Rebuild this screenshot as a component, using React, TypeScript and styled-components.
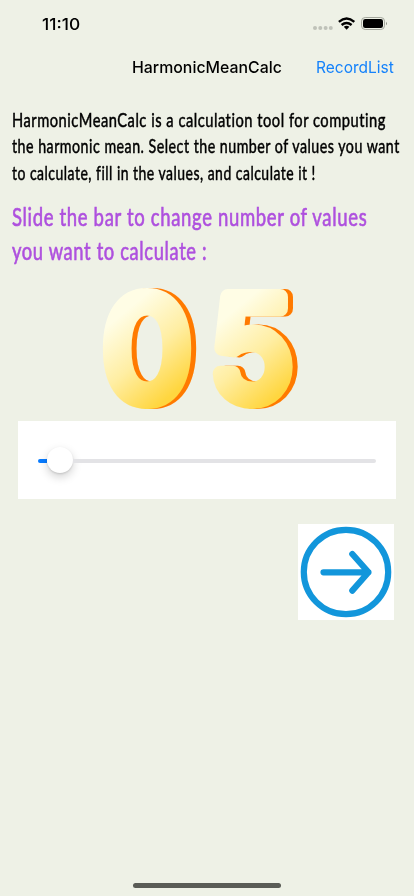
import React, { useLayoutEffect, useRef, useState } from "react";
import styled, { createGlobalStyle } from "styled-components";

const GlobalStyle = createGlobalStyle`
  * { box-sizing: border-box; }
  body { margin: 0; background: #eef1e6; }
`;

const Screen = styled.div`
  width: 414px;
  height: 896px;
  display: flex;
  flex-direction: column;
  overflow: hidden;
  background: #eef1e6;
  color: #000;
  font-family: Inter, "Liberation Sans", sans-serif;
`;

const StatusBar = styled.header`
  height: 48px;
  flex: none;
  display: flex;
  align-items: center;
  justify-content: space-between;
  padding: 0 26px 0 42px;
  font-size: 16px;
  font-weight: 550;
`;

const StatusIcons = styled.svg`
  display: block;
  width: 76px;
  height: 20px;
`;

const NavBar = styled.nav`
  height: 38px;
  flex: none;
  display: grid;
  grid-template-columns: 132px 184px 78px;
  align-items: center;
  font-size: 16.5px;
`;

const Title = styled.h1`
  grid-column: 2;
  margin: 0;
  font-size: inherit;
  font-weight: 550;
`;

const NavLink = styled.a`
  color: #1482fb;
`;

const Paragraph = styled.p<{ $size: number; $leading: number; $color: string; $weight: number }>`
  margin: 0;
  padding-left: 12px;
  font-family: Lato, "Liberation Sans", sans-serif;
  font-variant-ligatures: none;
  letter-spacing: 0.035em;
  font-size: ${(p) => p.$size}px;
  line-height: ${(p) => p.$leading}px;
  color: ${(p) => p.$color};
  -webkit-text-stroke: ${(p) => p.$weight}px ${(p) => p.$color};
`;

const Intro = styled.section`
  height: 183px;
  flex: none;
  padding-top: 21px;
  display: flex;
  flex-direction: column;
  gap: 13px;
`;

const FitBox = styled.span<{ $width: number }>`
  display: block;
  width: ${(p) => p.$width}px;
  white-space: nowrap;
`;

const FitText = styled.span`
  display: inline-block;
  transform-origin: 0 50%;
`;

const Digits = styled.svg`
  display: block;
  flex: none;
  width: 220px;
  height: 140px;
  margin: 11px 0 0 90px;
  overflow: visible;
  font-family: Inter, sans-serif;
  font-size: 141px;
  font-weight: 400;
`;

const DigitText = styled.text`
  stroke-width: 16px;
  stroke-linejoin: round;
  filter: drop-shadow(5px 0 0 #ff7a00);
`;

const SliderPanel = styled.div`
  flex: none;
  width: 378.5px;
  height: 77.5px;
  margin: 1px 0 0 17.5px;
  padding: 2px 20px 0 20.5px;
  display: flex;
  align-items: center;
  background: #fff;
`;

const TrackFill = styled.div`
  width: 9px;
  height: 4px;
  border-radius: 2px 0 0 2px;
  background: #087bff;
`;

const Thumb = styled.div`
  width: 26px;
  height: 26px;
  flex: none;
  margin-top: -2px;
  border-radius: 50%;
  background: #fff;
  box-shadow: 0 4px 10px rgba(0, 0, 0, 0.18), 0 1px 2px rgba(0, 0, 0, 0.12);
`;

const TrackRest = styled.div`
  flex: 1;
  height: 4px;
  border-radius: 0 2px 2px 0;
  background: #e3e3e6;
`;

const NextButton = styled.button`
  align-self: flex-end;
  flex: none;
  width: 96px;
  height: 96px;
  margin: 25.5px 20px 0 0;
  padding: 0;
  border: 0;
  background: #fff;
  svg { display: block; }
`;

const HomeIndicator = styled.div`
  width: 148px;
  height: 5px;
  flex: none;
  margin: auto auto 8px 133px;
  border-radius: 3px;
  background: #5a5c56;
`;

/** A single line of text, scaled horizontally to fill the given width. */
function Fitted({ width, children }: { width: number; children: string }) {
  const ref = useRef<HTMLSpanElement>(null);
  const [scale, setScale] = useState(1);
  useLayoutEffect(() => {
    if (ref.current) setScale(width / ref.current.offsetWidth);
  }, [width, children]);
  return (
    <FitBox $width={width}>
      <FitText ref={ref} style={{ transform: `scaleX(${scale})` }}>{children}</FitText>
    </FitBox>
  );
}

function Digit({ value, x, width }: { value: string; x: number; width: number }) {
  const id = `gold-${value}`;
  return (
    <g>
      <linearGradient id={id} gradientUnits="userSpaceOnUse" x1={x + 15} y1="38" x2={x + 75} y2="110">
        <stop offset="0" stopColor="#fffde5" />
        <stop offset="0.5" stopColor="#ffeea3" />
        <stop offset="1" stopColor="#ffd63f" />
      </linearGradient>
      <DigitText x={x} y={120} textLength={width} lengthAdjust="spacingAndGlyphs" fill={`url(#${id})`} stroke={`url(#${id})`}>
        {value}
      </DigitText>
    </g>
  );
}

export default function App() {
  return (
    <>
      <GlobalStyle />
      <Screen>
        <StatusBar>
          <Fitted width={38}>11:10</Fitted>
          <StatusIcons viewBox="0 0 76 20">
            <g fill="#bfc2b9">
              <circle cx="3" cy="14" r="2" />
              <circle cx="8.3" cy="14" r="2" />
              <circle cx="13.6" cy="14" r="2" />
              <circle cx="18.8" cy="14" r="2" />
            </g>
            <g fill="none" stroke="#000" strokeWidth="2.4">
              <path d="M26.9 7.8 Q34.6 1.3 42.3 7.8" />
              <path d="M29.6 11 Q34.6 6.8 39.6 11" />
            </g>
            <path d="M31.8 12.8 Q34.6 10.8 37.4 12.8 L34.6 15.8Z" />
            <rect x="49.5" y="3.5" width="23" height="12" rx="3.7" fill="none" stroke="#a4a79d" />
            <rect x="51" y="5" width="20" height="9" rx="2.3" />
            <path d="M74 7.7 Q76 9.5 74 11.3Z" fill="#8d9087" />
          </StatusIcons>
        </StatusBar>
        <NavBar>
          <Title><Fitted width={150}>HarmonicMeanCalc</Fitted></Title>
          <NavLink><Fitted width={78}>RecordList</Fitted></NavLink>
        </NavBar>
        <Intro>
          <Paragraph $size={19.5} $leading={26.4} $color="#000" $weight={0.5}>
            <Fitted width={374}>HarmonicMeanCalc is a calculation tool for computing</Fitted>
            <Fitted width={388}>the harmonic mean. Select the number of values you want</Fitted>
            <Fitted width={304}>to calculate, fill in the values, and calculate it !</Fitted>
          </Paragraph>
          <Paragraph $size={25} $leading={34} $color="#ae50de" $weight={0.65}>
            <Fitted width={355}>Slide the bar to change number of values</Fitted>
            <Fitted width={195}>you want to calculate :</Fitted>
          </Paragraph>
        </Intro>
        <Digits viewBox="0 0 220 140">
          <Digit value="0" x={12.5} width={89} />
          <Digit value="5" x={120} width={83} />
        </Digits>
        <SliderPanel>
          <TrackFill />
          <Thumb />
          <TrackRest />
        </SliderPanel>
        <NextButton aria-label="Next">
          <svg width="96" height="96" viewBox="0 0 96 96" fill="none" stroke="#1296db" strokeWidth="6.2" strokeLinecap="round" strokeLinejoin="round">
            <circle cx="48" cy="48" r="42.2" />
            <path d="M25.5 48.3H70.5M54.3 30L70.5 48.3L54.3 66.6" />
          </svg>
        </NextButton>
        <HomeIndicator />
      </Screen>
    </>
  );
}
